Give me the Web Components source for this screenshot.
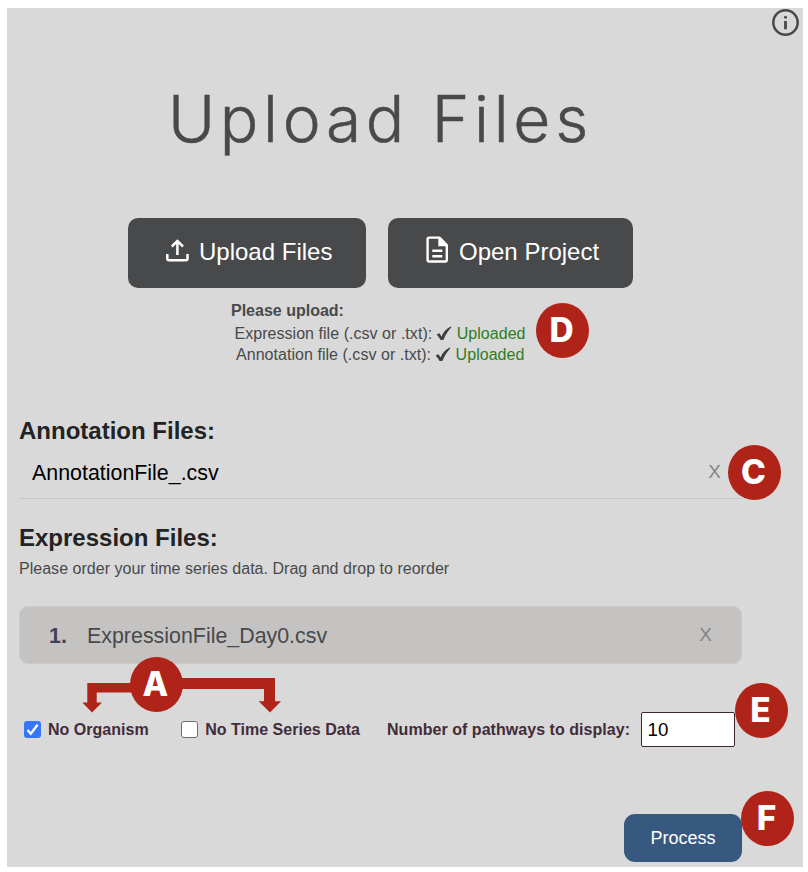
<!DOCTYPE html>
<html lang="en">
<head>
<meta charset="utf-8">
<title>Upload Files</title>
<style>
html,body{margin:0;background:#fff}
body{font-family:"Liberation Sans",Arial,sans-serif;color:#48494b}
</style>
</head>
<body>
<upload-page></upload-page>
<script>
function define(name, html) {
  const t = document.createElement('template');
  t.innerHTML = html;
  customElements.define(name, class extends HTMLElement {
    constructor() {
      super();
      this.attachShadow({ mode: 'open' }).appendChild(t.content.cloneNode(true));
    }
  });
}

define('big-button', `
<style>
:host{display:flex;box-sizing:border-box;height:70px;border-radius:10px;background:#48494b;color:#fff;font-size:24px;line-height:68px;padding-left:37px;white-space:nowrap}
.icon{width:25px;margin-right:9px;flex:none;display:flex}
</style>
<span class="icon"><slot name="icon"></slot></span><slot></slot>`);

define('upload-status', `
<style>
:host{display:block;font-size:16px;line-height:22px;letter-spacing:.04px;white-space:nowrap}
svg{width:16px;height:15px;margin:0 4.500px 0 4px;vertical-align:-2px}
b{font-weight:400;color:#2f7d1e}
</style>
<slot></slot><svg viewBox="0 0 16 15"><path d="M.6 8.400 3.400 7.200 5.600 10.400C7.300 6.300 10 2.800 14.700.6L15.400 1.300C12 5 9.500 8.800 7.700 13.400Q6.300 14.400 4.600 13.900Q2.900 10.800.6 8.400Z" fill="#3d3e40"/></svg><b>Uploaded</b>`);

define('section-title', `
<style>:host{display:block;font-size:24px;font-weight:700;line-height:28px;height:28px;color:#222324;white-space:nowrap}</style>
<slot></slot>`);

define('remove-mark', `
<style>:host{display:block;font-family:"Liberation Sans",Arial,sans-serif;font-size:19px;line-height:24px;color:#858585}</style>
<slot></slot>`);

define('annotation-row', `
<style>
:host{display:flex;box-sizing:border-box;width:723px;height:54px;padding:0 21px 0 13px;justify-content:space-between;border-bottom:1px solid #c6c6c6;color:#000;font-size:21.400px;line-height:24px}
.name{padding-top:16px}.x{padding-top:15px}
</style>
<span class="name"><slot></slot></span><remove-mark class="x">X</remove-mark>`);

define('expression-row', `
<style>
:host{display:flex;box-sizing:border-box;width:723px;height:58px;border:1px solid #cbcac9;border-radius:9px;background:#c4c3c1;padding:0 29px;font-size:21.400px;line-height:24px;color:#48494b}
.n{width:38px;padding-top:17px;font-weight:700;color:#454059}
.f{flex:1;padding-top:17px}.x{padding-top:16px}
</style>
<span class="n"><slot name="n"></slot></span><span class="f"><slot></slot></span><remove-mark class="x">X</remove-mark>`);

define('check-option', `
<style>
:host{display:flex;align-items:center;font-size:16px;font-weight:700;line-height:22px;letter-spacing:.02px;color:#432c39;white-space:nowrap}
i{box-sizing:border-box;width:17px;height:17px;border:1px solid #6f6f6f;border-radius:3px;background:#fff;margin-right:7px;flex:none}
svg{display:none;width:17px;height:17px}
:host([checked]) i{border:0;background:#3577f6}
:host([checked]) svg{display:block}
</style>
<i><svg viewBox="0 0 17 17"><path d="M3.500 8.900 6.800 12.700 13.600 3.700" fill="none" stroke="#fff" stroke-width="2.300"/></svg></i><slot></slot>`);

define('number-field', `
<style>
:host{display:flex;align-items:center;font-size:16px;font-weight:700;line-height:22px;letter-spacing:.04px;color:#432c39;white-space:nowrap}
span{box-sizing:border-box;width:94px;height:35px;border:1.500px solid #3f2836;border-radius:2px;background:#fff;color:#000;font-weight:400;font-size:18.700px;line-height:33px;padding-left:6px;margin-left:10.500px}
</style>
<slot></slot><span><slot name="value"></slot></span>`);

define('call-badge', `
<style>
:host{position:absolute;box-sizing:border-box;padding-right:2px;width:53px;height:55px;border-radius:50%;background:#b02318;color:#fff;font:800 33.500px/54px Inter,sans-serif;text-align:center}
</style>
<slot></slot>`);

define('action-button', `
<style>:host{display:block;width:118px;height:48px;border-radius:11px;background:#38597f;color:#fff;font-size:18px;line-height:48px;text-align:center}</style>
<slot></slot>`);

define('upload-page', `
<style>
:host{display:block;position:relative;box-sizing:border-box;width:808px;height:872px;padding:8px 5px 5px 7px}
main{background:#d9d9d9;height:859px;display:flex;flex-direction:column;align-items:flex-start}
h1{margin:71px 0 0 161px;font:300 64px/80px Inter,sans-serif;letter-spacing:4.700px;-webkit-text-stroke:.5px #48494b;height:80px;white-space:nowrap}
.buttons{display:flex;gap:22px;margin:59px 0 0 121px}
.up{width:238px}.open{width:245px}
.status{margin:12px 0 0 224px;height:66px}
.status strong{display:block;font-size:16px;line-height:22px;height:22.500px}
.s1{margin-left:3.500px;height:21.500px}.s2{margin-left:5px}
.t1{margin:51px 0 0 12px}
.r1{margin-left:12px}
.t2{margin:25px 0 0 12px}
p{margin:6px 0 0 12px;font-size:16px;line-height:22px;letter-spacing:.025px}
.r2{margin:26px 0 0 12px}
.opts{display:flex;align-items:center;height:35px;margin:48px 0 0 17px}
.o2{margin-left:32.500px}.num{margin-left:27px}
.process{margin:67px 0 0 617px}
.info{position:absolute;left:771px;top:8px;width:29px;height:29px}
.arrows{position:absolute;left:80px;top:670px;width:210px;height:50px}
</style>
<main>
<h1>Upload Files</h1>
<div class="buttons">
<big-button class="up"><svg slot="icon" width="25" height="70" viewBox="0 0 25 70"><path d="M2.300 36V40.500Q2.300 42.300 4.100 42.300H20.700Q22.500 42.300 22.500 40.500V36M12.400 37V24M6.800 28.500 12.400 22.900 18 28.500" fill="none" stroke="#fff" stroke-width="2.500"/></svg>Upload Files</big-button>
<big-button class="open"><svg slot="icon" width="25" height="70" viewBox="0 0 25 70"><path d="M4.200 19.600H14.500L21.800 27V41.800Q21.800 43.500 20.300 43.500H4.200Q2.600 43.500 2.600 41.800V21.200Q2.600 19.600 4.200 19.600Z" fill="none" stroke="#fff" stroke-width="2.400" stroke-linejoin="round"/><path d="M13.300 19.600H14.500L22 27V28.200H13.300Z" fill="#fff"/><path d="M7.300 32.800H17.300M7.300 38.200H17.300" stroke="#fff" stroke-width="2.400"/></svg>Open Project</big-button>
</div>
<div class="status"><strong>Please upload:</strong>
<upload-status class="s1">Expression file (.csv or .txt):</upload-status>
<upload-status class="s2">Annotation file (.csv or .txt):</upload-status></div>
<section-title class="t1">Annotation Files:</section-title>
<annotation-row class="r1">AnnotationFile_.csv</annotation-row>
<section-title class="t2">Expression Files:</section-title>
<p>Please order your time series data. Drag and drop to reorder</p>
<expression-row class="r2"><span slot="n">1.</span>ExpressionFile_Day0.csv</expression-row>
<div class="opts">
<check-option checked>No Organism</check-option>
<check-option class="o2">No Time Series Data</check-option>
<number-field class="num">Number of pathways to display:<span slot="value">10</span></number-field>
</div>
<action-button class="process">Process</action-button>
</main>
<svg class="info" viewBox="0 0 29 29"><circle cx="14.500" cy="14.500" r="12.200" fill="none" stroke="#48494b" stroke-width="2.500"/><circle cx="14.500" cy="9.300" r="1.500" fill="#48494b"/><path d="M14.500 13V21.300" stroke="#48494b" stroke-width="2.800"/></svg>
<svg class="arrows" viewBox="80 670 210 50"><path d="M87.300 683H140V692.500H96.700V702.500H102L92 712.500 82.300 702.500H87.300ZM170 678H275V701.300H281L270 712.500 258.700 701.300H264V689H170Z" fill="#b02318"/></svg>
<call-badge style="left:130px;top:657px">A</call-badge>
<call-badge style="left:728px;top:445px">C</call-badge>
<call-badge style="left:536px;top:303px">D</call-badge>
<call-badge style="left:735px;top:683px">E</call-badge>
<call-badge style="left:741px;top:791px">F</call-badge>`);
</script>
</body>
</html>
